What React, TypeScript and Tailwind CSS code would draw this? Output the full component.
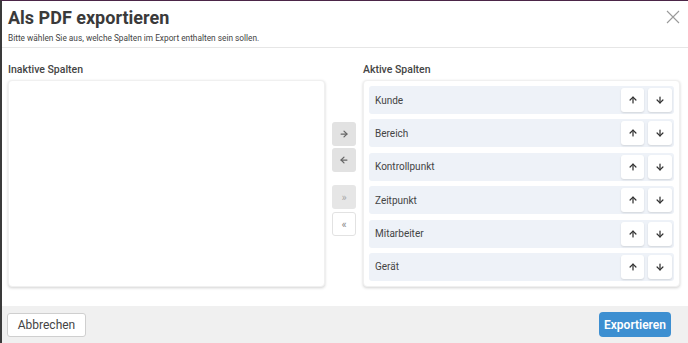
import React from 'react';
import { ArrowUp, ArrowDown, ArrowRight, ArrowLeft } from 'lucide-react';

const columns = ['Kunde', 'Bereich', 'Kontrollpunkt', 'Zeitpunkt', 'Mitarbeiter', 'Gerät'];

const App: React.FC = () => {
  return (
    <div className="w-[688px] h-[343px] overflow-hidden bg-white flex flex-col border-t border-t-[#4b2547] border-l-2 border-l-[#3a3a3a] font-['Roboto',sans-serif] text-[#333]">
      {/* Header */}
      <div className="relative h-[47px] shrink-0 border-b border-[#e6e6e6] px-[6px] pt-[5px]">
        <h1 className="text-[18px] leading-[24px] font-bold text-[#3a3a3a]">Als PDF exportieren</h1>
        <p className="text-[8.3px] leading-[12px] mt-[2px] text-[#444]">
          Bitte wählen Sie aus, welche Spalten im Export enthalten sein sollen.
        </p>
        <button className="absolute right-[8px] top-[9px] w-[14px] h-[14px]">
          <svg viewBox="0 0 14 14" className="w-[14px] h-[14px]" fill="none" stroke="#9a9a9a" strokeWidth="1.1">
            <path d="M1 1 L13 13 M13 1 L1 13" />
          </svg>
        </button>
      </div>

      {/* Body */}
      <div className="flex-1 flex pl-[6px] pr-[8px] pt-[15px]">
        <div className="w-[317px] flex flex-col">
          <div className="text-[10.5px] leading-[14px] font-medium text-[#444] mb-[3px]">Inaktive Spalten</div>
          <div className="h-[207px] bg-white rounded-[4px] shadow-[0_1px_3px_rgba(0,0,0,0.18)] border border-[#f0f0f0]" />
        </div>

        <div className="w-[38px] flex flex-col items-center pt-[59px]">
          <button className="w-[24px] h-[24px] rounded-[3px] bg-[#e2e2e2] flex items-center justify-center">
            <ArrowRight size={10} strokeWidth={3} className="text-[#666]" />
          </button>
          <button className="w-[24px] h-[24px] mt-[2px] rounded-[3px] bg-[#e2e2e2] flex items-center justify-center">
            <ArrowLeft size={10} strokeWidth={3} className="text-[#666]" />
          </button>
          <button className="w-[24px] h-[24px] mt-[13px] rounded-[3px] bg-[#e6e6e6] flex items-center justify-center text-[11px] leading-none text-[#aaa]">
            »
          </button>
          <button className="w-[24px] h-[24px] mt-[3px] rounded-[3px] bg-white border border-[#e2e2e2] flex items-center justify-center text-[11px] leading-none text-[#888]">
            «
          </button>
        </div>

        <div className="w-[317px] flex flex-col">
          <div className="text-[10.5px] leading-[14px] font-medium text-[#444] mb-[3px]">Aktive Spalten</div>
          <div className="h-[207px] bg-white rounded-[4px] shadow-[0_1px_3px_rgba(0,0,0,0.18)] border border-[#f0f0f0] px-[5px] pt-[5px] flex flex-col gap-[5.4px]">
            {columns.map((c) => (
              <div key={c} className="h-[28px] shrink-0 bg-[#eef2f8] rounded-[3px] flex items-center pl-[6px] pr-[2px]">
                <span className="flex-1 text-[10px] text-[#444]">{c}</span>
                <button className="w-[23px] h-[24px] bg-white rounded-[3px] shadow-[0_1px_2px_rgba(0,0,0,0.12)] flex items-center justify-center">
                  <ArrowUp size={10} strokeWidth={3} className="text-[#333]" />
                </button>
                <button className="w-[24px] h-[24px] ml-[4px] bg-white rounded-[3px] shadow-[0_1px_2px_rgba(0,0,0,0.12)] flex items-center justify-center">
                  <ArrowDown size={10} strokeWidth={3} className="text-[#333]" />
                </button>
              </div>
            ))}
          </div>
        </div>
      </div>

      {/* Footer */}
      <div className="h-[37px] shrink-0 bg-[#f0f0f0] flex items-center justify-between pl-[5px] pr-[17px]">
        <button className="w-[79px] h-[24px] bg-white border border-[#cfcfcf] rounded-[3px] text-[12px] text-[#444]">
          Abbrechen
        </button>
        <button className="w-[72px] h-[25px] bg-[#3d8fd1] rounded-[4px] text-[12px] font-semibold text-white">
          Exportieren
        </button>
      </div>
    </div>
  );
};

export default App;
